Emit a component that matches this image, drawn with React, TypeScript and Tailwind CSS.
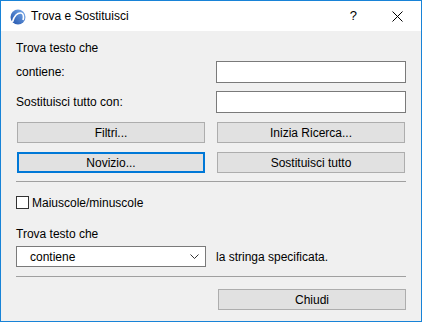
import React from 'react';

const font = { fontFamily: '"Liberation Sans", Arial, sans-serif' };

function AppIcon() {
  return (
    <svg width="16" height="16" viewBox="0 0 16 16">
      <defs>
        <linearGradient id="g" x1="0" y1="1" x2="1" y2="0">
          <stop offset="0" stopColor="#1d4fa8" />
          <stop offset="1" stopColor="#7fb0ee" />
        </linearGradient>
      </defs>
      <circle cx="8" cy="8" r="7.5" fill="url(#g)" />
      <path d="M2.5 13 C4 7 7.5 3.5 11 4 C13.5 4.5 14 7.5 13 11" stroke="#fff" strokeWidth="1.6" fill="none" />
    </svg>
  );
}

function Button({ label, focused }: { label: string; focused?: boolean }) {
  return (
    <button
      className={`w-[188px] h-[21px] bg-[#e1e1e1] text-[12px] text-black flex items-center justify-center ${
        focused ? 'border-2 border-[#0078d7]' : 'border border-[#adadad]'
      }`}
    >
      {label}
    </button>
  );
}

export default function App() {
  return (
    <div className="w-[422px] h-[322px] border border-[#1883d7] flex flex-col bg-[#f0f0f0] text-black" style={font}>
      {/* barra del titolo */}
      <div className="h-[30px] bg-white flex items-center shrink-0">
        <div className="ml-[9px] mt-[1px]">
          <AppIcon />
        </div>
        <span className="ml-[5px] text-[12px]">Trova e Sostituisci</span>
        <span className="ml-auto text-[13px] mr-[35px]">?</span>
        <svg width="11" height="11" viewBox="0 0 11 11" className="mr-[18px]">
          <path d="M0.5 0.5 L10.5 10.5 M10.5 0.5 L0.5 10.5" stroke="#000" strokeWidth="1" />
        </svg>
      </div>

      <div className="flex flex-col pl-[15px] text-[12px]">
        <div className="h-[16px] mt-[9px] flex items-center">Trova testo che</div>

        <div className="flex items-center h-[22px] mt-[5px]">
          <span className="w-[200px]">contiene:</span>
          <input className="w-[190px] h-[22px] bg-white border border-[#7a7a7a] outline-none" />
        </div>

        <div className="flex items-center h-[22px] mt-[8px]">
          <span className="w-[200px]">Sostituisci tutto con:</span>
          <input className="w-[190px] h-[22px] bg-white border border-[#7a7a7a] outline-none" />
        </div>

        <div className="flex gap-[12px] ml-[1px] mt-[9px]">
          <Button label="Filtri..." />
          <Button label="Inizia Ricerca..." />
        </div>
        <div className="flex gap-[12px] ml-[1px] mt-[9px]">
          <Button label="Novizio..." focused />
          <Button label="Sostituisci tutto" />
        </div>

        <div className="h-px w-[390px] bg-[#a0a0a0] mt-[8px]" />

        <label className="flex items-center mt-[14px] h-[13px]">
          <span className="w-[13px] h-[13px] bg-white border border-[#333333]" />
          <span className="ml-[3px]">Maiuscole/minuscole</span>
        </label>

        <div className="h-[16px] mt-[17px] flex items-center">Trova testo che</div>

        <div className="flex items-center mt-[4px] h-[21px]">
          <div className="w-[190px] h-[21px] bg-white border border-[#7a7a7a] flex items-center pl-[13px] pr-[6px]">
            <span>contiene</span>
            <svg width="9" height="6" viewBox="0 0 9 6" className="ml-auto">
              <path d="M0.5 0.5 L4.5 4.5 L8.5 0.5" stroke="#333" strokeWidth="1" fill="none" />
            </svg>
          </div>
          <span className="ml-[10px]">la stringa specificata.</span>
        </div>

        <div className="h-px w-[390px] bg-[#a0a0a0] mt-[9px]" />

        <div className="flex justify-end w-[390px] mt-[12px]">
          <Button label="Chiudi" />
        </div>
      </div>
    </div>
  );
}
